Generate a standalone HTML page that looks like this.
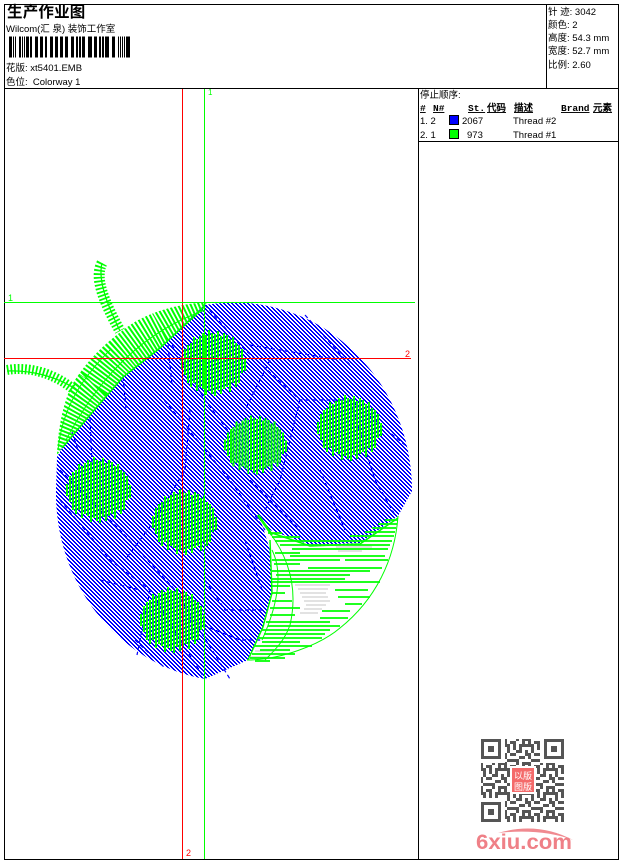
<!DOCTYPE html>
<html><head><meta charset="utf-8"><style>
html,body{margin:0;padding:0;background:#fff;width:620px;height:860px;overflow:hidden}
svg{display:block;position:absolute;left:0;top:0}
text{font-family:"Liberation Sans","WenQuanYi Zen Hei","Noto Sans CJK SC",sans-serif;font-size:9.5px;fill:#000}
.b{font-family:"Liberation Mono","WenQuanYi Zen Hei",monospace;font-weight:bold;font-size:9.5px;text-decoration:underline}
</style></head><body>
<svg width="620" height="860" viewBox="0 0 620 860" xmlns="http://www.w3.org/2000/svg">
<defs>
<pattern id="bl" width="4" height="4" patternUnits="userSpaceOnUse">
<path shape-rendering="crispEdges" fill="#0000ff" d="M0 0h2v1H0zM1 1h2v1H1zM2 2h2v1H2zM3 3h1v1H3zM0 3h1v1H0z"/>
</pattern>
<pattern id="qr" width="24" height="24" patternUnits="userSpaceOnUse">
<path fill="#555" shape-rendering="crispEdges" d="M0 0h6v3H0zM9 0h3v6H9zM15 0h9v3h-9zM3 3h3v6H3zM12 6h6v3h-6zM21 6h3v6h-3zM0 9h3v6H0zM6 9h6v3H6zM15 12h6v3h-6zM3 15h6v3H3zM12 15h3v6h-3zM18 18h6v3h-6zM0 18h3v6H0zM6 21h6v3H6zM15 3h3v3h-3zM9 15h3v3H9zM18 21h3v3h-3z"/>
</pattern>
<clipPath id="cres"><path d="M57 455C58 425 65 395 75 380C88 360 105 342 133 323C155 310 180 304 207 302L203 310 160 348 123 377 90 415 62 448z"/></clipPath>
<filter id="sb"><feGaussianBlur stdDeviation=".35"/></filter>
<g id="blob" fill="none" stroke="#00ff00" stroke-width="2" shape-rendering="crispEdges">
<path d="M-32 -6V6M-29 -14V12M-26 -18V20M-23 -20V24M-20 -26V20M-17 -24V28M-14 -27V24M-11 -30V26M-8 -28V32M-5 -33V28M-2 -30V31M1 -29V33M4 -32V27M7 -27V31M10 -30V26M13 -28V24M16 -24V29M19 -26V20M22 -20V24M25 -18V20M28 -14V10M31 -5V8"/>
</g>
</defs>

<!-- frame -->
<g shape-rendering="crispEdges" fill="#000">
<rect x="4" y="4" width="614" height="1"/>
<rect x="4" y="4" width="1" height="856"/>
<rect x="618" y="4" width="1" height="856"/>
<rect x="4" y="859" width="615" height="1"/>
<rect x="4" y="88" width="614" height="1"/>
<rect x="546" y="4" width="1" height="84"/>
<rect x="418" y="88" width="1" height="771"/>
<rect x="418" y="141" width="200" height="1"/>
</g>

<!-- header -->
<text x="7" y="17" style="font-size:15.5px;font-weight:bold;letter-spacing:.2px">生产作业图</text>
<text x="6" y="32" style="font-size:9.5px">Wilcom(汇 泉) 装饰工作室</text>
<line x1="9" y1="47" x2="130" y2="47" stroke="#000" stroke-width="21" stroke-dasharray="3 1 1 1 1 3 2 1 1 1 1 1 3 1 2 3 3 2 3 2 2 3 3 2 3 2 3 2 3 3 3 2 2 1 2 1 3 3 4 2 3 2 2 1 2 1 4 3 3 3 1 1 1 1 1 1 1 1 5 20" shape-rendering="crispEdges"/>
<text x="6" y="71">花版: xt5401.EMB</text>
<text x="6" y="85">色位:&#160; Colorway 1</text>

<text x="548" y="15">针 迹: 3042</text>
<text x="548" y="28">颜色: 2</text>
<text x="548" y="41">高度: 54.3 mm</text>
<text x="548" y="54">宽度: 52.7 mm</text>
<text x="548" y="68">比例: 2.60</text>

<!-- table -->
<text x="420" y="98">停止顺序:</text>
<text x="420" y="111" class="b">#</text>
<text x="433" y="111" class="b">N#</text>
<text x="468" y="111" class="b">St.</text>
<text x="487" y="111" class="b">代码</text>
<text x="514" y="111" class="b">描述</text>
<text x="561" y="111" class="b">Brand</text>
<text x="593" y="111" class="b">元素</text>
<text x="420" y="124">1. 2</text>
<text x="420" y="138">2. 1</text>
<rect x="449.500" y="115.500" width="9" height="9" fill="#0000ff" stroke="#000"/>
<rect x="449.500" y="129.500" width="9" height="9" fill="#00ff00" stroke="#000"/>
<text x="462" y="124">2067</text>
<text x="467" y="138">973</text>
<text x="513" y="124">Thread #2</text>
<text x="513" y="138">Thread #1</text>

<!-- blue body -->
<path fill="url(#bl)" d="M62 448L90 415 123 377 160 348 205 305A178 188 0 0 1 412 491L398 516 360 543 310 545 270 530 260 518 270 550 272 593 263 627 248 660 205 679A178 188 0 0 1 56 490L57 457z"/>
<g fill="none" stroke="#0000ff" stroke-width="1.200" stroke-dasharray="4 3">
<path d="M62 448L90 415 123 377 160 348 205 305" stroke-dasharray="none"/>
<path d="M123 377L126 408M90 418L92 465M72 432L78 450M168 345L172 385M172 345L205 400 235 440M160 395L230 480 265 530"/>
<path d="M60 500L110 560 150 590 180 640 205 679M150 590L137 655M60 470L120 530 175 590 230 679"/>
<path d="M205 305L240 345 300 400 350 400 405 445M300 400L280 480 265 510M350 400L375 480 395 515"/>
<path d="M190 410L185 470 155 520 125 560M250 480L300 530M320 470L345 530M190 620L240 640 262 640M205 580L225 610 265 610M245 540L262 590"/>
<path d="M250 345L340 360M305 315L350 365M270 360L245 410M135 640L165 668M100 580L140 590"/>
</g>

<!-- blobs -->
<use href="#blob" transform="translate(214 363)"/>
<use href="#blob" transform="translate(256 445) scale(.97 .9)"/>
<use href="#blob" transform="translate(350 428)"/>
<use href="#blob" transform="translate(99 490)"/>
<use href="#blob" transform="translate(185 522)"/>
<use href="#blob" transform="translate(173 620)"/>

<!-- top-left crescent -->
<g clip-path="url(#cres)" fill="none" stroke="#00ff00">
<path d="M58 454C68 420 80 400 95 385C105 370 115 358 125 350C140 338 150 332 160 327C175 318 190 310 207 304" stroke-width="46" stroke-dasharray="2 1.700"/>
</g>
<path d="M58 450C62 410 80 380 110 350" fill="none" stroke="#00ff00" stroke-width="1"/>
<path d="M66 440C95 385 135 335 205 310" fill="none" stroke="#00ff00" stroke-width="1"/>
<path d="M62 448L90 415 123 377 160 348 205 306" fill="none" stroke="#00ff00" stroke-width="1.500"/>
<!-- leaves -->
<g fill="none" stroke="#00ff00">
<path d="M102 263C94 278 104 302 120 331" stroke-width="11" stroke-dasharray="1.700 1.900"/>
<path d="M102 263C98 280 106 302 120 331" stroke-width="1.300"/>
<path d="M7 370C30 366 55 374 73 389" stroke-width="10" stroke-dasharray="1.700 1.900"/>
<path d="M7 371C30 370 55 376 74 388" stroke-width="1.300"/>
</g>

<!-- lower-right leaf -->
<g fill="none" stroke="#c4c4c4" stroke-width="1">
<path d="M336 547H372M338 551H362M295 585H330M298 589H328M300 593H326M302 597H328M304 601H330M306 605H326M304 609H322M300 613H318M255 651H275M250 657H270"/>
</g>
<g fill="none" stroke="#00ff00" stroke-width="1.800">
<path d="M385 520H398M378 524H397M372 528H396M268 533H282M365 532H395M272 537H300M350 536H394M275 541H392M280 545H390M292 549H388M275 553H300M290 556H385M272 560H340M345 560H388M274 564H300M308 568H382M272 571H370M276 575H350M272 579H345M272 582H380M272 586H290M335 590H368M272 593H285M338 597H370M272 601H292M345 604H362M270 608H300M322 611H350M270 615H295M320 618H348M266 622H330M268 626H340M262 630H330M264 634H325M258 638H322M262 642H300M254 646H312M260 650H290M252 654H295M250 658H285M255 661H270"/>
</g>
<g fill="none" stroke="#00ff00" stroke-width="1">
<path d="M398 516C395 560 375 600 340 628 320 645 280 660 247 660"/>
<path d="M270 533C290 560 298 590 290 625 285 640 275 650 265 660"/>
<path d="M272 550C282 570 280 600 262 640"/>
</g>
<path d="M258 515L272 535" stroke="#00ff00" stroke-width="2.500" fill="none"/>
<path d="M272 533L310 546 360 544 398 518" stroke="#00ff00" stroke-width="1.500" fill="none"/>
<path d="M270 540L272 593 263 627 248 660" stroke="#00ff00" stroke-width="1.500" fill="none"/>

<!-- crosshair -->
<g shape-rendering="crispEdges">
<rect x="182" y="89" width="1" height="770" fill="#ff0000"/>
<rect x="204" y="89" width="1" height="770" fill="#00ff00"/>
<rect x="4" y="302" width="411" height="1" fill="#00ff00"/>
<rect x="4" y="358" width="407" height="1" fill="#ff0000"/>
</g>
<text x="8" y="301" style="fill:#00ff00;font-size:9px">1</text>
<text x="208" y="95" style="fill:#00ff00;font-size:8px">1</text>
<text x="405" y="357" style="fill:#ff0000;font-size:9px">2</text>
<text x="186" y="856" style="fill:#ff0000;font-size:9px">2</text>

<!-- QR -->
<g filter="url(#sb)">
<rect x="481" y="739" width="83" height="83" fill="url(#qr)"/>
<g fill="#fff"><rect x="481" y="739" width="24" height="24"/><rect x="540" y="739" width="24" height="24"/><rect x="481" y="798" width="24" height="24"/></g>
<g fill="none" stroke="#555" stroke-width="3">
<rect x="482.500" y="740.500" width="17" height="17"/><rect x="545.500" y="740.500" width="17" height="17"/><rect x="482.500" y="803.500" width="17" height="17"/>
</g>
<g fill="#555"><rect x="488" y="746" width="6" height="6"/><rect x="551" y="746" width="6" height="6"/><rect x="488" y="809" width="6" height="6"/></g>
<rect x="510" y="766" width="26" height="28" fill="#fff"/>
<rect x="512" y="768" width="22" height="24" fill="#f46a6a"/>
</g>
<text x="523" y="779" text-anchor="middle" style="fill:#fff;font-size:9px">以版</text>
<text x="523" y="790" text-anchor="middle" style="fill:#fff;font-size:9px">图版</text>

<!-- logo -->
<path d="M498 833C525 825 550 828 573 840C552 832 525 830 498 833z" fill="#f08a90"/>
<text x="476" y="849" textLength="96" lengthAdjust="spacingAndGlyphs" style="font-family:'Liberation Sans',sans-serif;font-weight:bold;font-size:21px;fill:#ef8087">6xiu.com</text>
</svg>
</body></html>
